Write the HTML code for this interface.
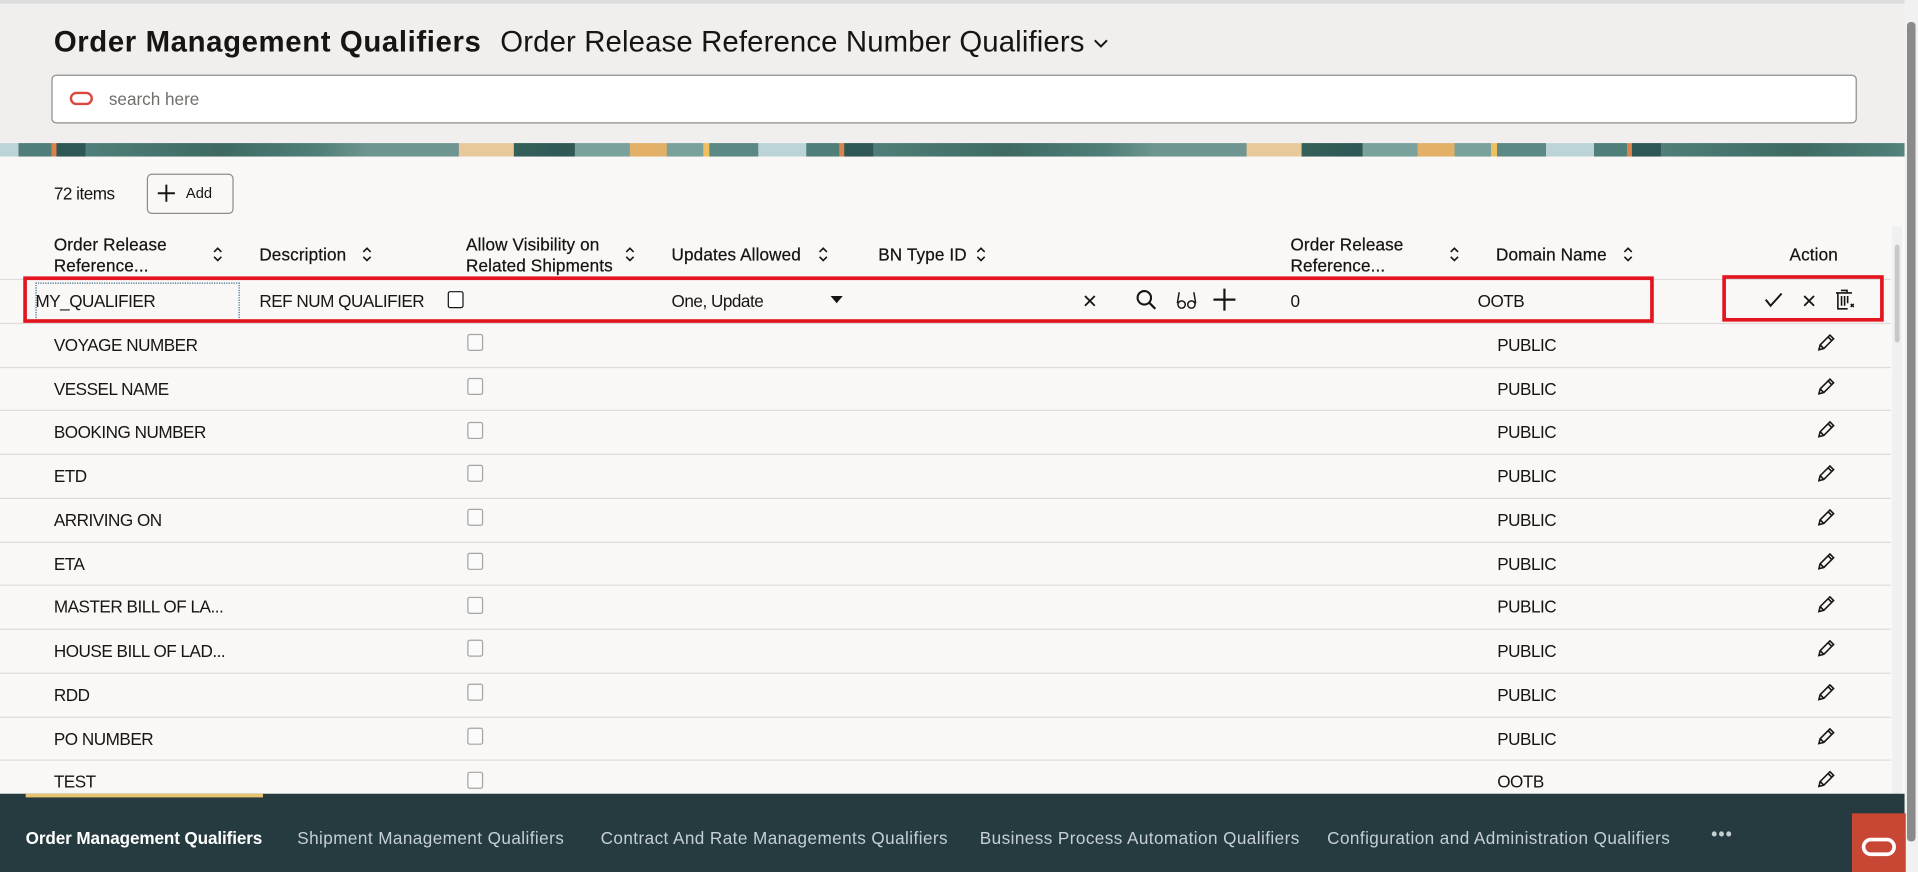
<!DOCTYPE html>
<html><head><meta charset="utf-8">
<style>
*{box-sizing:border-box;margin:0;padding:0}
html,body{width:1918px;height:872px;overflow:hidden;background:#f9f8f6}
#w{position:absolute;left:0;top:0;width:1568px;height:713px;transform:scale(1.22321,1.22300);transform-origin:0 0;font-family:"Liberation Sans",sans-serif;color:#161513;background:#f9f8f6;overflow:hidden}
.a{position:absolute}
.hdr{left:0;top:0;width:1568px;height:117px;background:#f0efed;border-top:3px solid #dcdcdc}
.t{font-size:14px;white-space:nowrap;letter-spacing:-.4px}
.h{font-size:14px;line-height:17px;white-space:nowrap;color:#161513;letter-spacing:.1px;-webkit-text-stroke:.2px #161513}
.line{left:0;width:1546px;height:1px;background:#dedcda}
.cb{width:13px;height:14px;border:1px solid #a5a4a2;border-radius:2px;background:#fbfbfb}
.sort{width:10px;height:16px}
.tab{font-size:14px;color:#c6d0d3;top:677px;white-space:nowrap;letter-spacing:.35px}
</style></head><body><div id="w">
<div class="a hdr"></div>
<div class="a" style="left:44px;top:21px;font-size:24px;white-space:nowrap;letter-spacing:.5px;font-weight:bold">Order Management Qualifiers</div>
<div class="a" style="left:409px;top:21px;font-size:24px;white-space:nowrap;letter-spacing:.1px">Order Release Reference Number Qualifiers</div>
<svg class="a" style="left:893px;top:31px" width="14" height="10" viewBox="0 0 14 10"><path d="M2 2l5 5 5-5" fill="none" stroke="#161513" stroke-width="1.6"/></svg>
<div class="a" style="left:42px;top:61px;width:1476px;height:40px;background:#fff;border:1px solid #8f8d8a;border-radius:4px"></div>
<div class="a" style="left:57px;top:75px;width:19px;height:11px;border:2.5px solid #d9493c;border-radius:6px"></div>
<div class="a t" style="left:89px;top:73px;color:#6f6e6b;letter-spacing:0">search here</div>
<div class="a" style="left:0;top:117px;width:1568px;height:11px;background:linear-gradient(90deg,#bcd4d6 0,#bcd4d6 15px,#4f7f78 15px,#4f7f78 42px,#d9834f 42px,#d9834f 46px,#2f5753 46px,#2f5753 70px,#4f7f78 70px,#3f6a64 180px,#4f7f78 260px,#6f9590 300px,#6f9590 375px,#e8c99a 375px,#e8c99a 420px,#34605a 420px,#2f5753 470px,#7aa19c 470px,#7aa19c 515px,#e2b066 515px,#e2b066 545px,#7aa19c 545px,#7aa19c 575px,#f0c060 575px,#f0c060 580px,#5c8983 580px,#5c8983 620px,#bcd4d6 620px,#bcd4d6 644px);background-size:644px 11px"></div>
<div class="a t" style="left:44px;top:150px">72 items</div>
<div class="a" style="left:120px;top:142px;width:71px;height:33px;border:1px solid #8f8d8a;border-radius:4px"></div>
<svg class="a" style="left:128px;top:150px" width="16" height="16"><path d="M8 1v14M1 8h14" stroke="#161513" stroke-width="1.6"/></svg>
<div class="a" style="left:152px;top:151px;font-size:12px">Add</div>

<div class="a h" style="left:44px;top:192px">Order Release<br>Reference...</div>
<div class="a h" style="left:212px;top:200px">Description</div>
<div class="a h" style="left:381px;top:192px">Allow Visibility on<br>Related Shipments</div>
<div class="a h" style="left:549px;top:200px">Updates Allowed</div>
<div class="a h" style="left:718px;top:200px">BN Type ID</div>
<div class="a h" style="left:1055px;top:192px">Order Release<br>Reference...</div>
<div class="a h" style="left:1223px;top:200px">Domain Name</div>
<div class="a h" style="left:1463px;top:200px">Action</div>
<svg width="0" height="0" style="position:absolute"><defs><symbol id="s" viewBox="0 0 10 16"><path d="M2 6l3-3 3 3M2 10l3 3 3-3" fill="none" stroke="#161513" stroke-width="1.3"/></symbol>
<symbol id="p" viewBox="0 0 16 16"><path d="M3 13l1-4 8-8 3 3-8 8zM4 9l3 3M10.5 2.5l3 3" fill="none" stroke="#161513" stroke-width="1.3"/></symbol></defs></svg>
<svg class="a sort" style="left:173px;top:200px"><use href="#s"/></svg>
<svg class="a sort" style="left:295px;top:200px"><use href="#s"/></svg>
<svg class="a sort" style="left:510px;top:200px"><use href="#s"/></svg>
<svg class="a sort" style="left:668px;top:200px"><use href="#s"/></svg>
<svg class="a sort" style="left:797px;top:200px"><use href="#s"/></svg>
<svg class="a sort" style="left:1184px;top:200px"><use href="#s"/></svg>
<svg class="a sort" style="left:1326px;top:200px"><use href="#s"/></svg>

<div class="a line" style="top:228px"></div>
<div class="a line" style="top:264px"></div>
<div class="a line" style="top:300px"></div>
<div class="a line" style="top:335px"></div>
<div class="a line" style="top:371px"></div>
<div class="a line" style="top:407px"></div>
<div class="a line" style="top:443px"></div>
<div class="a line" style="top:478px"></div>
<div class="a line" style="top:514px"></div>
<div class="a line" style="top:550px"></div>
<div class="a line" style="top:586px"></div>
<div class="a line" style="top:621px"></div>

<!-- edit row -->
<div class="a" style="left:29px;top:231px;width:167px;height:31px;border:1px dotted #3a6a8a"></div>
<div class="a t" style="left:29px;top:238px">MY_QUALIFIER</div>
<div class="a t" style="left:212px;top:238px">REF NUM QUALIFIER</div>
<div class="a cb" style="left:366px;top:238px;border-color:#161513;background:#fff"></div>
<div class="a t" style="left:549px;top:238px">One, Update</div>
<svg class="a" style="left:679px;top:242px" width="10" height="6"><path d="M0 0h10L5 6z" fill="#161513"/></svg>
<svg class="a" style="left:885px;top:240px" width="12" height="12"><path d="M2 2l8 8M10 2l-8 8" stroke="#161513" stroke-width="1.5"/></svg>
<svg class="a" style="left:928px;top:236px" width="18" height="18"><circle cx="7.5" cy="7.5" r="5.5" fill="none" stroke="#161513" stroke-width="1.7"/><path d="M11.5 11.5l5 5" stroke="#161513" stroke-width="1.8"/></svg>
<svg class="a" style="left:961px;top:238px" width="18" height="16"><path d="M3 1L1.5 10M15 1l1.5 9" fill="none" stroke="#161513" stroke-width="1.2"/><circle cx="5" cy="11" r="3" fill="none" stroke="#161513" stroke-width="1.2"/><circle cx="13" cy="11" r="3" fill="none" stroke="#161513" stroke-width="1.2"/></svg>
<svg class="a" style="left:991px;top:235px" width="20" height="20"><path d="M10 1v18M1 10h18" stroke="#161513" stroke-width="1.8"/></svg>
<div class="a t" style="left:1055px;top:238px">0</div>
<div class="a t" style="left:1208px;top:238px">OOTB</div>
<svg class="a" style="left:1442px;top:238px" width="16" height="14"><path d="M1.5 7l4 5 9-10" fill="none" stroke="#161513" stroke-width="1.6"/></svg>
<svg class="a" style="left:1473px;top:240px" width="12" height="12"><path d="M2 2l8 8M10 2l-8 8" stroke="#161513" stroke-width="1.5"/></svg>
<svg class="a" style="left:1499px;top:236px" width="18" height="18"><path d="M6 1.5h5v2M2 3.5h13M3.5 3.5v13h8M6.5 6v8M9 6v8M11.5 6v6M14 12.5l2.5 2.5M16.5 12.5L14 15" fill="none" stroke="#161513" stroke-width="1.3"/></svg>
<div class="a" style="left:19px;top:226px;width:1333px;height:38px;border:3px solid #e3151f"></div>
<div class="a" style="left:1408px;top:225px;width:132px;height:38px;border:3px solid #e3151f"></div>

<!-- rows -->
<div class="a t" style="left:44px;top:274px">VOYAGE NUMBER</div>
<div class="a t" style="left:44px;top:310px">VESSEL NAME</div>
<div class="a t" style="left:44px;top:345px">BOOKING NUMBER</div>
<div class="a t" style="left:44px;top:381px">ETD</div>
<div class="a t" style="left:44px;top:417px">ARRIVING ON</div>
<div class="a t" style="left:44px;top:453px">ETA</div>
<div class="a t" style="left:44px;top:488px">MASTER BILL OF LA...</div>
<div class="a t" style="left:44px;top:524px">HOUSE BILL OF LAD...</div>
<div class="a t" style="left:44px;top:560px">RDD</div>
<div class="a t" style="left:44px;top:596px">PO NUMBER</div>
<div class="a t" style="left:44px;top:631px">TEST</div>

<div class="a cb" style="left:382px;top:273px"></div>
<div class="a cb" style="left:382px;top:309px"></div>
<div class="a cb" style="left:382px;top:345px"></div>
<div class="a cb" style="left:382px;top:380px"></div>
<div class="a cb" style="left:382px;top:416px"></div>
<div class="a cb" style="left:382px;top:452px"></div>
<div class="a cb" style="left:382px;top:488px"></div>
<div class="a cb" style="left:382px;top:523px"></div>
<div class="a cb" style="left:382px;top:559px"></div>
<div class="a cb" style="left:382px;top:595px"></div>
<div class="a cb" style="left:382px;top:631px"></div>

<div class="a t" style="left:1224px;top:274px">PUBLIC</div>
<div class="a t" style="left:1224px;top:310px">PUBLIC</div>
<div class="a t" style="left:1224px;top:345px">PUBLIC</div>
<div class="a t" style="left:1224px;top:381px">PUBLIC</div>
<div class="a t" style="left:1224px;top:417px">PUBLIC</div>
<div class="a t" style="left:1224px;top:453px">PUBLIC</div>
<div class="a t" style="left:1224px;top:488px">PUBLIC</div>
<div class="a t" style="left:1224px;top:524px">PUBLIC</div>
<div class="a t" style="left:1224px;top:560px">PUBLIC</div>
<div class="a t" style="left:1224px;top:596px">PUBLIC</div>
<div class="a t" style="left:1224px;top:631px">OOTB</div>

<svg class="a" style="left:1484px;top:273px" width="16" height="16"><use href="#p"/></svg>
<svg class="a" style="left:1484px;top:309px" width="16" height="16"><use href="#p"/></svg>
<svg class="a" style="left:1484px;top:344px" width="16" height="16"><use href="#p"/></svg>
<svg class="a" style="left:1484px;top:380px" width="16" height="16"><use href="#p"/></svg>
<svg class="a" style="left:1484px;top:416px" width="16" height="16"><use href="#p"/></svg>
<svg class="a" style="left:1484px;top:452px" width="16" height="16"><use href="#p"/></svg>
<svg class="a" style="left:1484px;top:487px" width="16" height="16"><use href="#p"/></svg>
<svg class="a" style="left:1484px;top:523px" width="16" height="16"><use href="#p"/></svg>
<svg class="a" style="left:1484px;top:559px" width="16" height="16"><use href="#p"/></svg>
<svg class="a" style="left:1484px;top:595px" width="16" height="16"><use href="#p"/></svg>
<svg class="a" style="left:1484px;top:630px" width="16" height="16"><use href="#p"/></svg>

<!-- scrollbars -->
<div class="a" style="left:1547px;top:185px;width:8px;height:464px;background:#f0f0f0"></div>
<div class="a" style="left:1549px;top:200px;width:4px;height:80px;background:#c8c8c8;border-radius:2px"></div>
<div class="a" style="left:1557px;top:0;width:11px;height:713px;background:#f1f1f1"></div>
<div class="a" style="left:1559px;top:18px;width:7px;height:670px;background:#8a8a8a;border-radius:3px"></div>

<!-- footer -->
<div class="a" style="left:0;top:649px;width:1557px;height:64px;background:#253b40"></div>
<div class="a" style="left:21px;top:649px;width:194px;height:3px;background:#e8c470"></div>
<div class="a tab" style="left:21px;color:#fff;font-weight:bold;letter-spacing:-.1px">Order Management Qualifiers</div>
<div class="a tab" style="left:243px">Shipment Management Qualifiers</div>
<div class="a tab" style="left:491px">Contract And Rate Managements Qualifiers</div>
<div class="a tab" style="left:801px">Business Process Automation Qualifiers</div>
<div class="a tab" style="left:1085px">Configuration and Administration Qualifiers</div>
<div class="a tab" style="left:1399px;top:674px;font-weight:bold;letter-spacing:1px">•••</div>
<div class="a" style="left:1514px;top:665px;width:44px;height:48px;background:#c74634"></div>
<div class="a" style="left:1522px;top:685px;width:28px;height:15px;border:3px solid #fff;border-radius:8px"></div>
</div></body></html>
